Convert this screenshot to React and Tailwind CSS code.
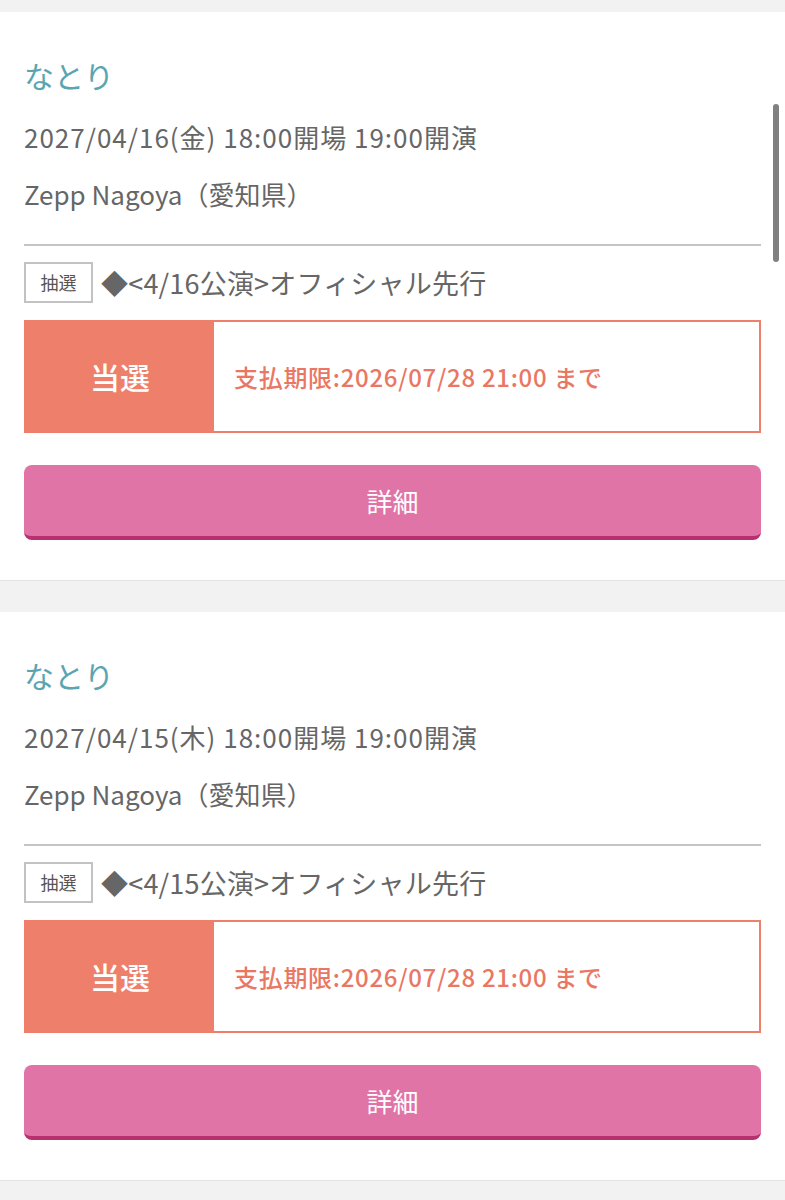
const tickets = [
  {
    id: 1,
    artist: "なとり",
    date: "2027/04/16(金) 18:00開場 19:00開演",
    venue: "Zepp Nagoya（愛知県）",
    kind: "抽選",
    title: "◆<4/16公演>オフィシャル先行",
    status: "当選",
    deadline: "支払期限:2026/07/28 21:00 まで",
  },
  {
    id: 2,
    artist: "なとり",
    date: "2027/04/15(木) 18:00開場 19:00開演",
    venue: "Zepp Nagoya（愛知県）",
    kind: "抽選",
    title: "◆<4/15公演>オフィシャル先行",
    status: "当選",
    deadline: "支払期限:2026/07/28 21:00 まで",
  },
];

function TicketCard({ ticket }) {
  return (
    <div className="bg-white px-6 pt-[43px] pb-10 border-b border-[#e4e4e4]">
      <h2 className="text-[30px] leading-[40px] text-[#5aa5b0]">
        {ticket.artist}
      </h2>
      <p className="mt-[25px] text-[26px] leading-[34px] tracking-[1px] text-[#666]">
        {ticket.date}
      </p>
      <p className="mt-[23px] text-[26px] leading-[34px] text-[#666]">
        {ticket.venue}
      </p>
      <div className="mt-[33px] h-[2px] bg-[#c4c4c4]" />

      <div className="mt-4 flex items-center gap-2">
        <span className="flex h-[41px] w-[69px] items-center justify-center border-2 border-[#c2c2c2] text-[18px] text-[#555]">
          {ticket.kind}
        </span>
        <span className="text-[27px] leading-[34px] tracking-[0.2px] text-[#666]">
          {ticket.title}
        </span>
      </div>

      <div className="mt-[17px] flex h-[113px] border-2 border-[#ee7f6a]">
        <div className="flex w-[188px] items-center justify-center bg-[#ee7f6a] text-[30px] font-medium text-white">
          {ticket.status}
        </div>
        <div className="flex flex-1 items-center pl-5 text-[24px] font-medium tracking-[0.7px] text-[#ea7763]">
          {ticket.deadline}
        </div>
      </div>

      <button className="mt-8 flex h-[75px] w-full items-center justify-center rounded-lg border-b-4 border-[#b8306e] bg-[#e074a6] text-[26px] text-white">
        詳細
      </button>
    </div>
  );
}

export default function App() {
  return (
    <div className="relative min-h-[1200px] bg-[#f2f2f2] pt-3 font-['Noto_Sans_CJK_JP','Noto_Sans',sans-serif]">
      <div className="flex flex-col gap-[31px]">
        {tickets.map((t) => (
          <TicketCard key={t.id} ticket={t} />
        ))}
      </div>
      {/* overlay scroll indicator */}
      <div className="absolute left-[773px] top-[104px] h-[158px] w-[6px] rounded-full bg-[#808080]" />
    </div>
  );
}
